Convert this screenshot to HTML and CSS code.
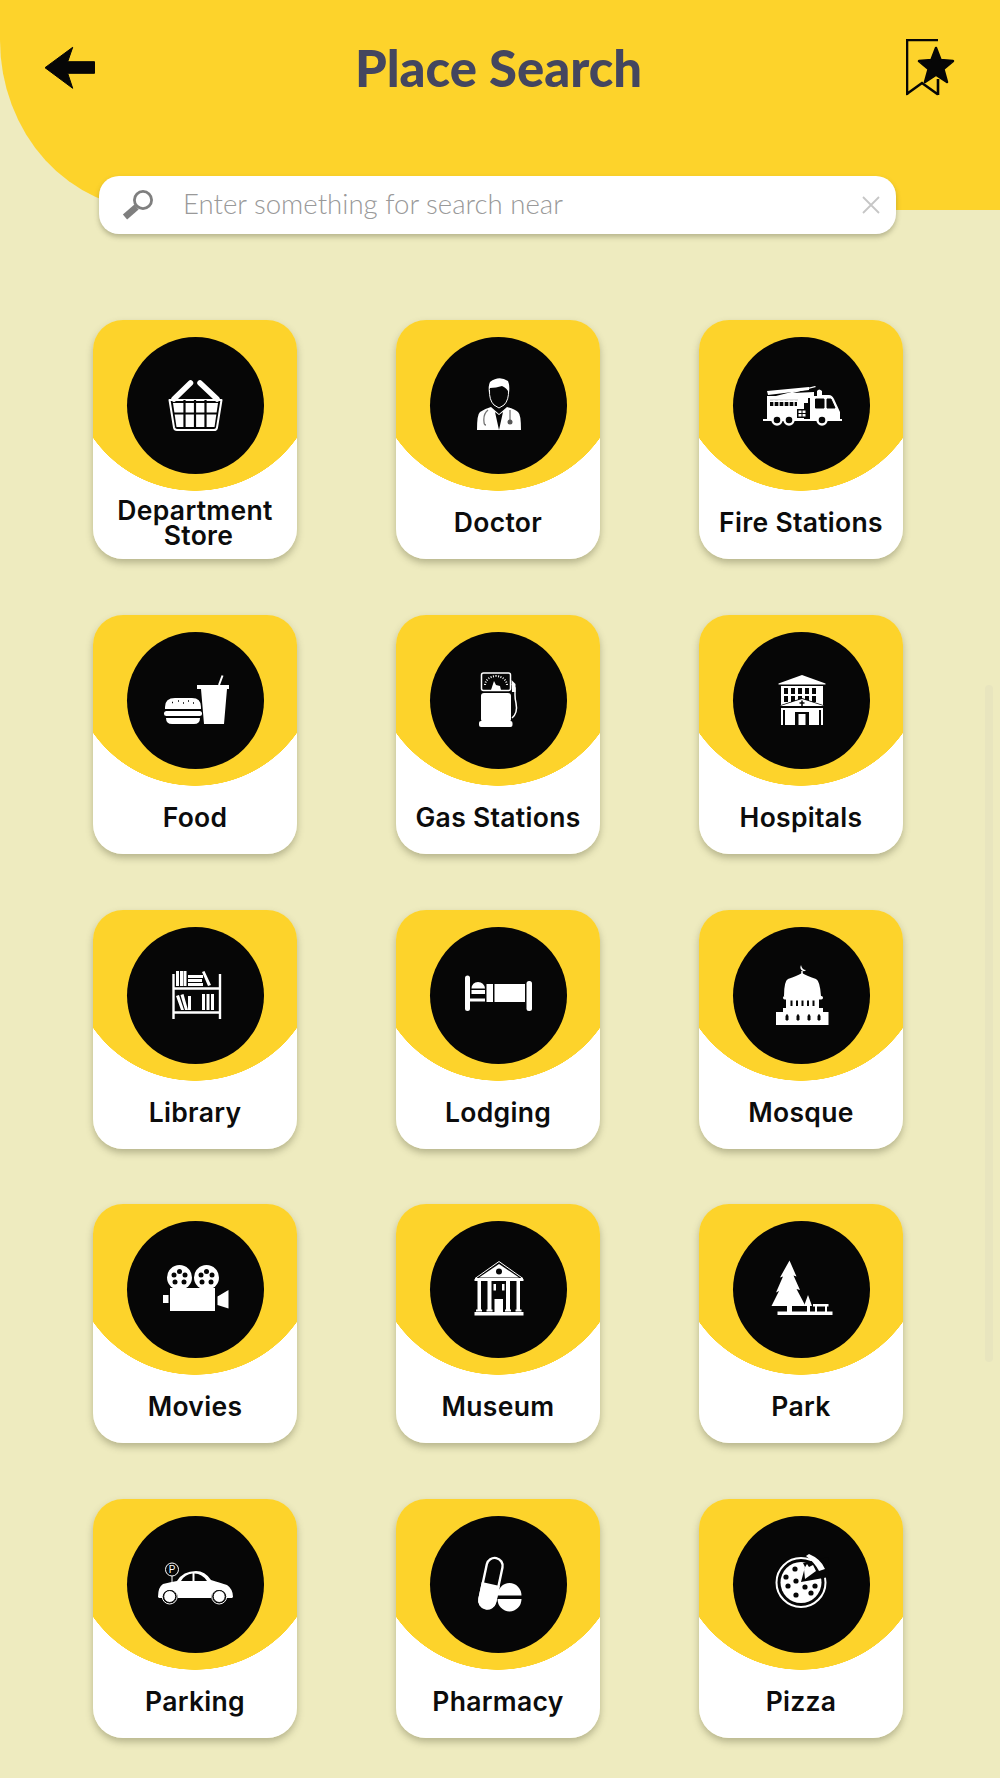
FILE: index.html
```html
<!DOCTYPE html>
<html lang="en">
<head>
    <meta charset="UTF-8">
    <meta name="viewport" content="width=device-width, initial-scale=1.0">
    <title>Place Search</title>
    <link rel="stylesheet" href="styles.css">
</head>
<body>
    <header class="top-bar">
        <svg class="back-icon" viewBox="0 0 52 50" width="52" height="50">
            <path d="M1 21.700 28.700 1.300 23.700 15.700H50.500V27.300H23.700L28.700 42.300Z" fill="#060606" stroke="#060606" stroke-linejoin="round"/>
        </svg>
        <h1>Place Search</h1>
        <svg class="saved-icon" viewBox="0 0 50 60" width="50" height="60">
            <path d="M1 1H32M1 0V56M0 55.500 16 44 32 55.500M32 40V56" fill="none" stroke="#060606" stroke-width="2.600"/>
            <path d="M30 9 34.600 21 47 22 37.400 30 41 43 30 35.600 19 43 22.600 30 13 22 25.400 21Z" fill="#060606" stroke="#060606" stroke-width="2.500" stroke-linejoin="round"/>
        </svg>
    </header>

    <div class="search-box">
        <svg class="search-icon" viewBox="0 0 34 32" width="34" height="32">
            <circle cx="22" cy="11" r="8.600" fill="none" stroke="#7f7f7f" stroke-width="2.800"/>
            <path d="M15.500 18 4 28" stroke="#7f7f7f" stroke-width="6.500"/>
        </svg>
        <span class="search-text">Enter something for search near</span>
        <svg class="clear-icon" viewBox="0 0 20 18" width="20" height="18">
            <path d="M2 1 18 17M18 1 2 17" stroke="#c6c6c6" stroke-width="1.800"/>
        </svg>
    </div>

    <main class="place-grid">
        <div class="place-card">
            <div class="icon-circle">
                <svg viewBox="0 0 137 137" width="137" height="137">
                    <path d="M47 61 63.500 45M90 61 73 45" stroke="#fff" stroke-width="5.500" stroke-linecap="round"/>
                    <path d="M42.500 62H94.500L90 89.500Q89.600 92 87 92H50Q47.500 92 47 89.500Z" fill="none" stroke="#fff" stroke-width="2" stroke-linejoin="round"/>
                    <path d="M46 65H91L87.500 89H49.500Z" fill="#fff"/>
                    <path d="M57.500 62V90M68 62V90M78.500 62V90M46 75.500H91" stroke="#060606" stroke-width="2.200"/>
                </svg>
            </div>
            <p class="place-name tight">Department<br>&nbsp;Store</p>
        </div>
        <div class="place-card">
            <div class="icon-circle">
                <svg viewBox="0 0 137 137" width="137" height="137">
                    <path d="M47 92Q47 76 50 74 54 71 61 69L69 76 77 69Q85 71 88 74 91 76 91 92Z" fill="#fff"/>
                    <path d="M60 44Q69 37 78 43 80 48 79 55 77 50 72 48 66 50 60 50 59 53 59 55 58 48 60 44Z" fill="#fff"/>
                    <path d="M59.500 52Q59 62 64 67L69 70 74 67Q79 62 78.500 52" fill="none" stroke="#fff" stroke-width="1"/>
                    <path d="M69 92 65 74 69 77 73 74Z" fill="#060606"/>
                    <path d="M58 72Q53 76 54 84 54 87 56 87M80 72V82" fill="none" stroke="#777" stroke-width="1.300"/>
                    <circle cx="80" cy="84" r="2.500" fill="#555"/>
                </svg>
            </div>
            <p class="place-name">Doctor</p>
        </div>
        <div class="place-card">
            <div class="icon-circle">
                <svg viewBox="0 0 137 137" width="137" height="137">
                    <path d="M35 60 82 48 83 49 60 55 81 54V60H36Z" fill="#fff"/>
                    <path d="M34 53 76 49V52L35 57Z" fill="#fff"/>
                    <path d="M34 58H75V65H71V81H34Z" fill="#fff"/>
                    <path d="M77 58H84V53Q86 50 89 53V57H96Q99 57 101 61L107 74V81H77Z" fill="#fff"/>
                    <rect x="30" y="81" width="79" height="2" fill="#fff"/>
                    <path d="M37 62H65M82.500 61H91V70H82.500ZM94 61H98L102 70H94Z" fill="#060606" stroke="#060606"/>
                    <path d="M37 64H64V68H37Z" fill="#060606"/>
                    <path d="M41 62V69M46 62V69M51 62V69M56 62V69M61 62V69M37 62H66V69" fill="none" stroke="#fff" stroke-width="1.300"/>
                    <path d="M64 71H74V80H64Z" fill="#060606"/>
                    <path d="M65 72H73V79H65ZM69 71V80M65 75.500H73" fill="#fff" stroke="#060606" stroke-width="1"/>
                    <path d="M76 61V80" stroke="#060606" stroke-width="1.200"/>
                    <g fill="#060606" stroke="#fff" stroke-width="2.400">
                        <circle cx="44" cy="82" r="4.500"/>
                        <circle cx="56" cy="82" r="4.500"/>
                        <circle cx="89" cy="82" r="4.500"/>
                    </g>
                </svg>
            </div>
            <p class="place-name">Fire Stations</p>
        </div>

        <div class="place-card">
            <div class="icon-circle">
                <svg viewBox="0 0 137 137" width="137" height="137">
                    <path d="M38 74Q38 65 48 65H65Q74 65 74 74V76H38Z" fill="#fff"/>
                    <rect x="37" y="78" width="38" height="5" rx="2.500" fill="#fff"/>
                    <path d="M39 85H73Q73 91 67 91H45Q39 91 39 85Z" fill="#fff"/>
                    <path d="M45 69.500H46M51 68H52M56 70H57M61 68H62M66 70H67" stroke="#060606" stroke-width="1.300"/>
                    <path d="M92 52 95.500 42.500" stroke="#fff" stroke-width="2"/>
                    <path d="M70 52H102V56H100L97 91H77L74 56H70Z" fill="#fff"/>
                </svg>
            </div>
            <p class="place-name">Food</p>
        </div>
        <div class="place-card">
            <div class="icon-circle">
                <svg viewBox="0 0 137 137" width="137" height="137">
                    <rect x="51.500" y="40" width="29" height="17.500" rx="2" fill="#060606" stroke="#fff" stroke-width="1.500"/>
                    <path d="M55 52Q56 44 66 43 76 44 77 52" fill="none" stroke="#fff" stroke-width="2" stroke-dasharray="1 1.500"/>
                    <path d="M61 57 64 48 66 52 70 53 71 57Z" fill="#fff"/>
                    <rect x="51" y="60" width="30" height="29" rx="3" fill="#fff"/>
                    <rect x="49" y="88" width="33.500" height="6" rx="2" fill="#fff"/>
                    <path d="M82 51 85 55V62Q85 66 86 70 88 80 82 85" fill="none" stroke="#fff" stroke-width="1.500"/>
                    <path d="M81.500 47 85.500 51V59H82Z" fill="#fff"/>
                </svg>
            </div>
            <p class="place-name">Gas Stations</p>
        </div>
        <div class="place-card">
            <div class="icon-circle">
                <svg viewBox="0 0 137 137" width="137" height="137">
                    <path d="M45.500 50.500 69 42 92.500 50.500V51.500H45.500Z" fill="#fff"/>
                    <rect x="48" y="53" width="42" height="39" fill="#fff"/>
                    <g fill="#060606">
                        <rect x="51" y="55" width="4" height="6"/><rect x="58" y="55" width="4" height="6"/><rect x="65" y="55" width="4" height="6"/><rect x="72" y="55" width="4" height="6"/><rect x="79" y="55" width="4" height="6"/>
                        <rect x="51" y="63" width="4" height="6"/><rect x="58" y="63" width="4" height="6"/><rect x="65" y="63" width="4" height="6"/><rect x="72" y="63" width="4" height="6"/><rect x="79" y="63" width="4" height="6"/>
                        <path d="M45 73 69 65 93 73V75H45Z"/>
                        <path d="M50 77H52V92H50ZM86 77H88V92H86ZM62 79H76V92H62Z"/>
                    </g>
                    <path d="M47 73 69 66 91 73Z" fill="#fff"/>
                    <path d="M69 67.500V73M66.500 70H71.500" stroke="#060606" stroke-width="1.500"/>
                    <path d="M65.500 81H72.500V92H65.500Z" fill="#fff"/>
                </svg>
            </div>
            <p class="place-name">Hospitals</p>
        </div>

        <div class="place-card">
            <div class="icon-circle">
                <svg viewBox="0 0 137 137" width="137" height="137">
                    <path d="M46.500 46V91M93 46V91M46 60.500H94M46 84.500H94" stroke="#fff" stroke-width="2.400"/>
                    <path d="M49 43H52V58H49ZM53 43H56V58H53ZM56.500 43H59.500V58H56.500ZM61 47H76V50H61ZM61 51H75V54H61ZM61 55H76V58H61ZM75 44 77.500 43 84 57 81 58Z" fill="#fff"/>
                    <path d="M49 68 52 67 57 82 54 82ZM53.500 67 56.500 66 61 82 58 82ZM61 68H64V82H61ZM75 66H78V82H75ZM79.500 66H82.500V82H79.500ZM84 66H87V82H84Z" fill="#fff"/>
                </svg>
            </div>
            <p class="place-name">Library</p>
        </div>
        <div class="place-card">
            <div class="icon-circle">
                <svg viewBox="0 0 137 137" width="137" height="137">
                    <rect x="35" y="47.500" width="5" height="35.500" rx="2.500" fill="#fff"/>
                    <rect x="96.500" y="53" width="5.500" height="30" rx="2.500" fill="#fff"/>
                    <rect x="64.500" y="56" width="30.500" height="18" fill="#fff"/>
                    <rect x="56.500" y="56" width="6.500" height="18" fill="#fff"/>
                    <path d="M41.500 60.500Q42 54 48 54 54 54 55 60.500Z" fill="#fff"/>
                    <rect x="41.500" y="62" width="13.500" height="4" fill="#fff"/>
                    <rect x="40" y="70.500" width="15" height="3" fill="#fff"/>
                </svg>
            </div>
            <p class="place-name">Lodging</p>
        </div>
        <div class="place-card">
            <div class="icon-circle">
                <svg viewBox="0 0 137 137" width="137" height="137">
                    <path d="M68 37Q66 41 70 43 72 43.500 73 42 69 42 68 37Z" fill="#fff"/>
                    <path d="M69 43V46" stroke="#fff" stroke-width="1.500"/>
                    <path d="M51 68Q51 53 55 51 64 48 69 45 74 48 83 51 87 53 88 68Z" fill="#fff"/>
                    <rect x="50" y="68" width="40" height="3.500" rx="1.700" fill="#fff"/>
                    <rect x="53" y="71" width="33" height="9" fill="#fff"/>
                    <path d="M58.500 72.500V78M64 72.500V78M69.500 72.500V78M75 72.500V78M80.500 72.500V78" stroke="#060606" stroke-width="2"/>
                    <path d="M50 80H90V84H95.500V97H43V84H50Z" fill="#fff"/>
                    <path d="M53 92V88Q54 85 55 88V92ZM64 92V88Q65 85 66 88V92ZM75 92V88Q76 85 77 88V92ZM85 92V88Q86 85 87 88V92Z" fill="#060606" stroke="#060606"/>
                </svg>
            </div>
            <p class="place-name">Mosque</p>
        </div>

        <div class="place-card">
            <div class="icon-circle">
                <svg viewBox="0 0 137 137" width="137" height="137">
                    <g fill="#060606">
                        <circle cx="52.500" cy="55.500" r="12.500" fill="#fff"/>
                        <circle cx="79.500" cy="55.500" r="12.500" fill="#fff"/>
                        <circle cx="52.500" cy="49.500" r="2.500"/><circle cx="47" cy="53" r="2.500"/><circle cx="58" cy="53" r="2.500"/><circle cx="48" cy="60" r="2.500"/><circle cx="57" cy="60" r="2.500"/>
                        <circle cx="79.500" cy="49.500" r="2.500"/><circle cx="74" cy="53" r="2.500"/><circle cx="85" cy="53" r="2.500"/><circle cx="75" cy="60" r="2.500"/><circle cx="84" cy="60" r="2.500"/>
                    </g>
                    <path d="M43 66H88V89H43ZM36 73H41.500V81H36ZM90.500 74.500 101.500 68V86.500L90.500 83Z" fill="#fff"/>
                </svg>
            </div>
            <p class="place-name">Movies</p>
        </div>
        <div class="place-card">
            <div class="icon-circle">
                <svg viewBox="0 0 137 137" width="137" height="137">
                    <path d="M45 56.500 69 39.500 93 56.500Z" fill="#060606" stroke="#fff" stroke-width="1"/>
                    <path d="M49 55.500 69 42 89 55.500Z" fill="#fff"/>
                    <circle cx="69" cy="49.500" r="3" fill="#060606"/>
                    <rect x="44.500" y="57" width="49" height="2" fill="#fff"/>
                    <path d="M47.500 59H51V88.500H47.500ZM57.500 59H61.500V88.500H57.500ZM76 59H80V88.500H76ZM86.500 59H90V88.500H86.500ZM63.500 62H66V68.500H63.500ZM72 62H74.500V68.500H72ZM64.500 77H73V90H64.500Z" fill="#fff"/>
                    <rect x="44.500" y="90" width="49" height="3.500" fill="#fff"/>
                    <path d="M46 88.500H52M56.500 88.500H62.500M75 88.500H81M85.500 88.500H91.500" stroke="#fff" stroke-width="2"/>
                </svg>
            </div>
            <p class="place-name">Museum</p>
        </div>
        <div class="place-card">
            <div class="icon-circle">
                <svg viewBox="0 0 137 137" width="137" height="137">
                    <path d="M56.500 38.500 63.500 54.500 60.500 53.500 67 68 63.500 67 72.500 84H59V90H54V84H38.500L46 69 43 70.500 50 54.500 47 55.500Z" fill="#fff"/>
                    <rect x="44.500" y="89.500" width="55" height="3.500" fill="#fff"/>
                    <path d="M75 73 79 84H77V90H74V84H71Z" fill="#fff"/>
                    <path d="M80 82H95.500V84.500H80ZM82 84H84V90H82ZM92 84H94V90H92Z" fill="#fff"/>
                </svg>
            </div>
            <p class="place-name">Park</p>
        </div>

        <div class="place-card">
            <div class="icon-circle">
                <svg viewBox="0 0 137 137" width="137" height="137">
                    <circle cx="45" cy="52.500" r="6.500" fill="none" stroke="#fff" stroke-width="1"/>
                    <text x="45" y="56" class="sign-letter">P</text>
                    <path d="M45 59V66" stroke="#fff" stroke-width="1"/>
                    <path d="M31 80Q31 70 36 67 44 65 50 64 56 54 69 54 78 54 84 63 94 66 100 68 106 72 106 80L105 81H100A8 8 0 0 0 84 81H51A8 8 0 0 0 35 81H32Z" fill="#fff"/>
                    <path d="M54 64Q58 57 65.500 56.500V64ZM67.500 56.500Q75 56.500 80 64H67.500Z" fill="#060606"/>
                    <circle cx="42.700" cy="79.500" r="6" fill="#fff" stroke="#060606" stroke-width="1"/>
                    <circle cx="92.200" cy="79.500" r="6" fill="#fff" stroke="#060606" stroke-width="1"/>
                    <circle cx="42.700" cy="79.500" r="7.500" fill="none" stroke="#fff" stroke-width="1"/>
                    <circle cx="92.200" cy="79.500" r="7.500" fill="none" stroke="#fff" stroke-width="1"/>
                </svg>
            </div>
            <p class="place-name">Parking</p>
        </div>
        <div class="place-card">
            <div class="icon-circle">
                <svg viewBox="0 0 137 137" width="137" height="137">
                    <g transform="rotate(12 61 66)">
                        <rect x="53" y="40.500" width="16" height="51" rx="8" fill="none" stroke="#fff" stroke-width="2.400"/>
                        <path d="M51.800 67H70.200V84A9.200 9.200 0 0 1 51.800 84Z" fill="#fff"/>
                    </g>
                    <path d="M67.500 78.500A12 12.500 0 0 1 91.500 78.500ZM67.500 82H91.500A12 12.500 0 0 1 67.500 82Z" fill="#fff"/>
                </svg>
            </div>
            <p class="place-name">Pharmacy</p>
        </div>
        <div class="place-card">
            <div class="icon-circle">
                <svg viewBox="0 0 137 137" width="137" height="137">
                    <circle cx="68" cy="65.500" r="24.500" fill="none" stroke="#fff" stroke-width="2"/>
                    <circle cx="68" cy="65.500" r="20.500" fill="#fff"/>
                    <path d="M68 65 72 50 70 46 95 40 96 60Z" fill="#060606"/>
                    <path d="M73 39 76 37 Q88 42 92 52L86 54Q82 46 73 39Z" fill="#fff"/>
                    <path d="M71 52 74 47 76 50 80 48 83 54 72 62Z" fill="#fff"/>
                    <g fill="#060606">
                        <circle cx="62" cy="52" r="2.600"/><circle cx="53" cy="60" r="2.600"/><circle cx="63" cy="64" r="2.600"/>
                        <circle cx="55" cy="69" r="2.600"/><circle cx="72" cy="70" r="2.600"/><circle cx="82" cy="69" r="2.600"/>
                        <circle cx="63" cy="78" r="2.600"/><circle cx="78" cy="76" r="2.600"/>
                    </g>
                </svg>
            </div>
            <p class="place-name">Pizza</p>
        </div>
    </main>

    <div class="scroll-thumb"></div>
</body>
</html>
```

FILE: styles.css
```css
* {
    margin: 0;
    padding: 0;
    box-sizing: border-box;
}

html, body {
    height: 1778px;
    overflow: hidden;
}

body {
    position: relative;
    background-color: #eeebbf;
    font-family: 'Inter', 'Liberation Sans', sans-serif;
}

.top-bar {
    display: flex;
    align-items: flex-start;
    justify-content: space-between;
    height: 210px;
    padding: 39px 44px 0 44px;
    background-color: #fdd32b;
    border-bottom-left-radius: 155px 170px;
}

.back-icon {
    margin-top: 7px;
}

.top-bar h1 {
    margin-right: 5px;
    color: #44465f;
    font-family: 'Lato', sans-serif;
    font-size: 50.8px;
    font-weight: 900;
    line-height: 58px;
}

.search-box {
    display: flex;
    align-items: center;
    width: 797px;
    height: 58px;
    margin: -34px 0 0 99px;
    padding: 0 15px 0 22px;
    background-color: #fff;
    border-radius: 20px;
    box-shadow: 0 3px 5px rgba(80, 80, 50, 0.35);
    position: relative;
}

.search-text {
    flex: 1;
    margin-left: 28px;
    padding-bottom: 4px;
    color: #999;
    font-family: 'Lato', sans-serif;
    font-size: 27.6px;
    font-weight: 300;
}

.place-grid {
    display: grid;
    grid-template-columns: repeat(3, 204px);
    grid-auto-rows: 239px;
    column-gap: 99px;
    row-gap: 55.8px;
    margin: 86px 0 0 93px;
}

.place-card {
    display: flex;
    flex-direction: column;
    align-items: center;
    padding-top: 17px;
    border-radius: 30px;
    background: radial-gradient(circle 125px at 50% 46px, #fdd32b 99.6%, #fff 100%);
    box-shadow: 0 4px 7px rgba(80, 80, 50, 0.35);
}

.icon-circle {
    width: 137px;
    height: 137px;
    padding-top: 1px;
    border-radius: 50%;
    background-color: #060606;
}

.icon-circle svg {
    display: block;
}

.sign-letter {
    fill: #fff;
    font-family: 'Liberation Sans', sans-serif;
    font-size: 10px;
    text-anchor: middle;
}

.place-name {
    margin-top: 33px;
    color: #0c0c0c;
    font-size: 26.5px;
    font-weight: 600;
    letter-spacing: 0.3px;
    line-height: 30px;
    text-align: center;
}

.place-name.tight {
    margin-top: 24px;
    line-height: 25px;
}

.scroll-thumb {
    position: absolute;
    top: 685px;
    right: 7px;
    width: 8px;
    height: 677px;
    border-radius: 4px;
    background-color: #e8e5be;
}
```
